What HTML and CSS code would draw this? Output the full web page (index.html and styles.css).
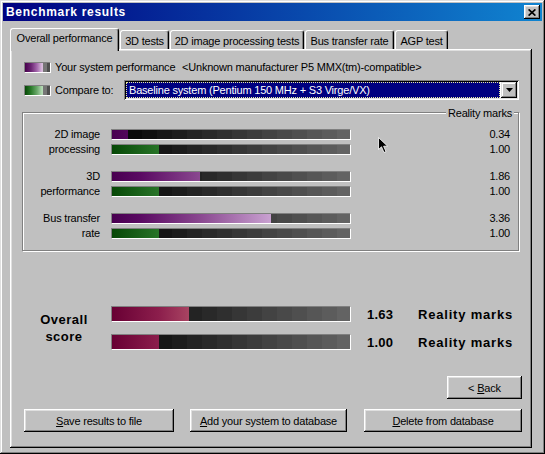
FILE: index.html
```html
<!DOCTYPE html>
<html>
<head>
<meta charset="utf-8">
<title>Benchmark results</title>
<link rel="stylesheet" href="styles.css">
</head>
<body>
<div class="window">
  <div class="titlebar">
    <span class="title">Benchmark results</span>
    <button class="close"><svg width="8" height="7" viewBox="0 0 8 7"><path d="M0.6 0.4 L7.4 6.6 M7.4 0.4 L0.6 6.6" stroke="#000" stroke-width="1.7" fill="none"/></svg></button>
  </div>

  <div class="tabs">
    <div class="tab active t1">Overall performance</div>
    <div class="tab t2">3D tests</div>
    <div class="tab t3">2D image processing tests</div>
    <div class="tab t4">Bus transfer rate</div>
    <div class="tab t5">AGP test</div>
  </div>

  <div class="panel">
    <div class="legend-row first">
      <span class="swatch swatch-you"></span>
      <span class="legend-label wide">Your system performance</span>
      <span class="legend-label">&lt;Unknown manufacturer P5 MMX(tm)-compatible&gt;</span>
    </div>
    <div class="legend-row compare">
      <span class="swatch swatch-base"></span>
      <span class="legend-label short">Compare to:</span>
      <div class="combo">
        <div class="combo-value">Baseline system (Pentium 150 MHz + S3 Virge/VX)</div>
        <div class="combo-btn"><svg width="7" height="4" viewBox="0 0 7 4"><path d="M0 0 H7 L3.5 4 Z" fill="#000"/></svg></div>
      </div>
    </div>

    <div class="group">
      <span class="group-title">Reality marks</span>
      <div class="pair">
        <div class="brow"><span class="blabel">2D image</span><div class="bar"><div class="fill you" style="width:16px"></div></div><span class="bval">0.34</span></div>
        <div class="brow"><span class="blabel">processing</span><div class="bar"><div class="fill base" style="width:47px"></div></div><span class="bval">1.00</span></div>
      </div>
      <div class="pair">
        <div class="brow"><span class="blabel">3D</span><div class="bar"><div class="fill you" style="width:88px"></div></div><span class="bval">1.86</span></div>
        <div class="brow"><span class="blabel">performance</span><div class="bar"><div class="fill base" style="width:47px"></div></div><span class="bval">1.00</span></div>
      </div>
      <div class="pair">
        <div class="brow"><span class="blabel">Bus transfer</span><div class="bar"><div class="fill you" style="width:159px"></div></div><span class="bval">3.36</span></div>
        <div class="brow"><span class="blabel">rate</span><div class="bar"><div class="fill base" style="width:47px"></div></div><span class="bval">1.00</span></div>
      </div>
    </div>

    <div class="overall">
      <div class="overall-label">Overall<br>score</div>
      <div class="orows">
        <div class="orow"><div class="bar big"><div class="fill score" style="width:77px"></div></div><span class="oval">1.63</span><span class="ounit">Reality marks</span></div>
        <div class="orow"><div class="bar big"><div class="fill score" style="width:47px"></div></div><span class="oval">1.00</span><span class="ounit">Reality marks</span></div>
      </div>
    </div>

    <div class="back-row"><button class="btn back">&lt; <u>B</u>ack</button></div>
    <div class="btn-row">
      <button class="btn save"><u>S</u>ave results to file</button>
      <button class="btn add"><u>A</u>dd your system to database</button>
      <button class="btn del"><u>D</u>elete from database</button>
    </div>
  </div>

  <svg class="cursor" width="12" height="17" viewBox="0 0 12 17"><path d="M0.5 0.5 L0.5 12.5 L3.5 9.8 L6 15.5 L8 14.6 L5.6 9.2 L9.6 9.2 Z" fill="#000" stroke="#fff" stroke-width="0.8" stroke-linejoin="miter"/></svg>
</div>
</body>
</html>
```

FILE: styles.css
```css
* { box-sizing: border-box; }
html, body { margin: 0; padding: 0; }
body {
  background: #c0c0c0;
  font-family: "Liberation Sans", Arial, sans-serif;
  font-size: 11px;
  letter-spacing: -0.2px;
  color: #000;
}
.window {
  position: relative;
  width: 545px;
  height: 454px;
  padding: 3px;
  background: #c0c0c0;
  box-shadow: inset -1px -1px 0 #000, inset 1px 1px 0 #dfdfdf, inset -2px -2px 0 #808080, inset 2px 2px 0 #fff;
}
.titlebar {
  height: 18px;
  display: flex;
  align-items: center;
  justify-content: space-between;
  padding: 0 2px 0 3px;
  background: linear-gradient(to right, #000080, #1084d0);
}
.title {
  color: #fff;
  font-weight: bold;
  font-size: 12px;
  line-height: 18px;
  letter-spacing: 0.7px;
}
.close {
  width: 16px;
  height: 14px;
  padding: 0 1px 0 0;
  border: 0;
  background: #c0c0c0;
  box-shadow: inset -1px -1px 0 #000, inset 1px 1px 0 #fff, inset -2px -2px 0 #808080, inset 2px 2px 0 #dfdfdf;
  display: flex;
  align-items: center;
  justify-content: center;
}
.tabs {
  display: flex;
  align-items: flex-end;
  height: 21px;
  margin: 7px 0 0 7px;
  position: relative;
  z-index: 1;
}
.tab {
  height: 19px;
  padding-top: 4px;
  line-height: 13px;
  text-align: center;
  white-space: nowrap;
  background: #c0c0c0;
  border-top: 1px solid #fff;
  border-left: 1px solid #fff;
  border-right: 1px solid #000;
  border-radius: 3px 3px 0 0;
  box-shadow: inset -1px 0 0 #808080;
  margin-left: 1px;
}
.tab.active {
  height: 23px;
  margin-bottom: -2px;
  margin-left: 0;
  padding-top: 3px;
}
.t1 { width: 109px; }
.t2 { width: 49px; }
.t3 { width: 134px; }
.t4 { width: 89px; }
.t5 { width: 53px; }

.panel {
  width: 522px;
  height: 399px;
  margin-left: 7px;
  padding-top: 12px;
  display: flex;
  flex-direction: column;
  box-shadow: inset -1px -1px 0 #000, inset 1px 1px 0 #fff, inset -2px -2px 0 #808080, inset 2px 2px 0 #dfdfdf;
}
.legend-row {
  display: flex;
  align-items: center;
  margin-left: 14px;
}
.legend-row.first { height: 13px; }
.legend-row.compare { height: 20px; margin-top: 6px; }
.legend-label { line-height: 13px; white-space: nowrap; }
.wide { width: 127px; }
.short { width: 69px; }
.swatch {
  width: 27px;
  height: 11px;
  margin-right: 4px;
  border-top: 1px solid #808080;
  border-left: 1px solid #808080;
  border-bottom: 1px solid #fff;
  border-right: 1px solid #fff;
}
.swatch-you {
  background: linear-gradient(to right, #48004e 0, #6a2472 6px, #a468ac 12px, #d8bcdc 17px, #d8bcdc 18px, #767676 18px, #767676 22px, #4e4e4e 22px);
}
.swatch-base {
  background: linear-gradient(to right, #064806 0, #2a7a2a 6px, #6aa86a 12px, #b4d8b4 17px, #b4d8b4 18px, #767676 18px, #767676 22px, #4e4e4e 22px);
}
.combo {
  width: 395px;
  height: 20px;
  padding: 2px;
  display: flex;
  background: #fff;
  box-shadow: inset 1px 1px 0 #808080, inset -1px -1px 0 #fff, inset 2px 2px 0 #000, inset -2px -2px 0 #dfdfdf;
}
.combo-value {
  flex: 1;
  height: 16px;
  margin-right: 1px;
  padding-left: 2px;
  line-height: 14px;
  color: #fff;
  background: #000080;
  border: 1px dotted #e8e8a0;
  white-space: nowrap;
}
.combo-btn {
  width: 16px;
  height: 16px;
  background: #c0c0c0;
  display: flex;
  align-items: center;
  justify-content: center;
  box-shadow: inset -1px -1px 0 #000, inset 1px 1px 0 #dfdfdf, inset -2px -2px 0 #808080, inset 2px 2px 0 #fff;
}

.group {
  position: relative;
  width: 497px;
  height: 139px;
  margin: 12px 0 0 12px;
  padding: 14px 8px 0 0;
  border: 1px solid #808080;
  box-shadow: inset 1px 1px 0 #fff, 1px 1px 0 #fff;
}
.group-title {
  position: absolute;
  top: -6px;
  right: 4px;
  padding: 0 2px;
  line-height: 13px;
  background: #c0c0c0;
}
.pair { display: flex; flex-direction: column; }
.pair + .pair { margin-top: 12px; }
.brow {
  display: flex;
  align-items: center;
  height: 15px;
  line-height: 15px;
}
.blabel {
  width: 77px;
  margin-right: 11px;
  text-align: right;
  white-space: nowrap;
}
.bval { flex: 1; text-align: right; }

.bar {
  width: 240px;
  height: 11px;
  border-top: 1px solid #808080;
  border-left: 1px solid #808080;
  border-bottom: 1px solid #fff;
  border-right: 1px solid #fff;
  background: linear-gradient(to right,
    #030303 0 15px, #090909 15px 30px, #0f0f0f 30px 45px, #161616 45px 60px,
    #1c1c1c 60px 75px, #232323 75px 90px, #292929 90px 105px, #2f2f2f 105px 120px,
    #363636 120px 135px, #3c3c3c 135px 150px, #434343 150px 165px, #494949 165px 180px,
    #4f4f4f 180px 195px, #565656 195px 210px, #5c5c5c 210px 225px, #636363 225px 238px);
}
.bar.big { height: 16px; }
.fill {
  height: 100%;
  background-size: 238px 100%;
  background-repeat: no-repeat;
}
.fill.you {
  background-image: linear-gradient(to right, #480050 0, #5a0a62 28px, #8a4890 88px, #c8a0d0 158px, #f2e2f6 238px);
}
.fill.base {
  background-image: linear-gradient(to right, #064806 0, #287428 47px, #80c080 150px, #c0e8c0 238px);
}
.fill.score {
  background-image: linear-gradient(to right, #680034 0, #8c1e4c 47px, #a84462 77px, #e8a0b0 180px, #ffd0d8 238px);
}

.overall {
  display: flex;
  align-items: center;
  margin: 55px 0 0 12px;
}
.overall-label {
  width: 84px;
  margin-right: 5px;
  text-align: center;
  font-weight: bold;
  font-size: 13px;
  line-height: 17px;
  letter-spacing: 0.5px;
}
.orows { display: flex; flex-direction: column; gap: 12px; }
.orow {
  display: flex;
  align-items: center;
  height: 16px;
  font-weight: bold;
  font-size: 13px;
  letter-spacing: 0.2px;
  white-space: nowrap;
}
.oval { width: 51px; margin-left: 16px; }
.ounit { letter-spacing: 0.8px; }

.back-row {
  display: flex;
  justify-content: flex-end;
  padding-right: 10px;
  margin-top: 26px;
}
.btn-row {
  display: flex;
  margin: 10px 0 0 14px;
}
.btn {
  height: 23px;
  padding: 0;
  border: 0;
  font: inherit;
  letter-spacing: inherit;
  color: #000;
  background: #c0c0c0;
  box-shadow: inset -1px -1px 0 #000, inset 1px 1px 0 #fff, inset -2px -2px 0 #808080, inset 2px 2px 0 #dfdfdf;
  white-space: nowrap;
}
.back { width: 75px; }
.save { width: 150px; }
.add { width: 157px; margin-left: 16px; }
.del { width: 158px; margin-left: 17px; }

.cursor {
  position: absolute;
  left: 378px;
  top: 137px;
}
```
